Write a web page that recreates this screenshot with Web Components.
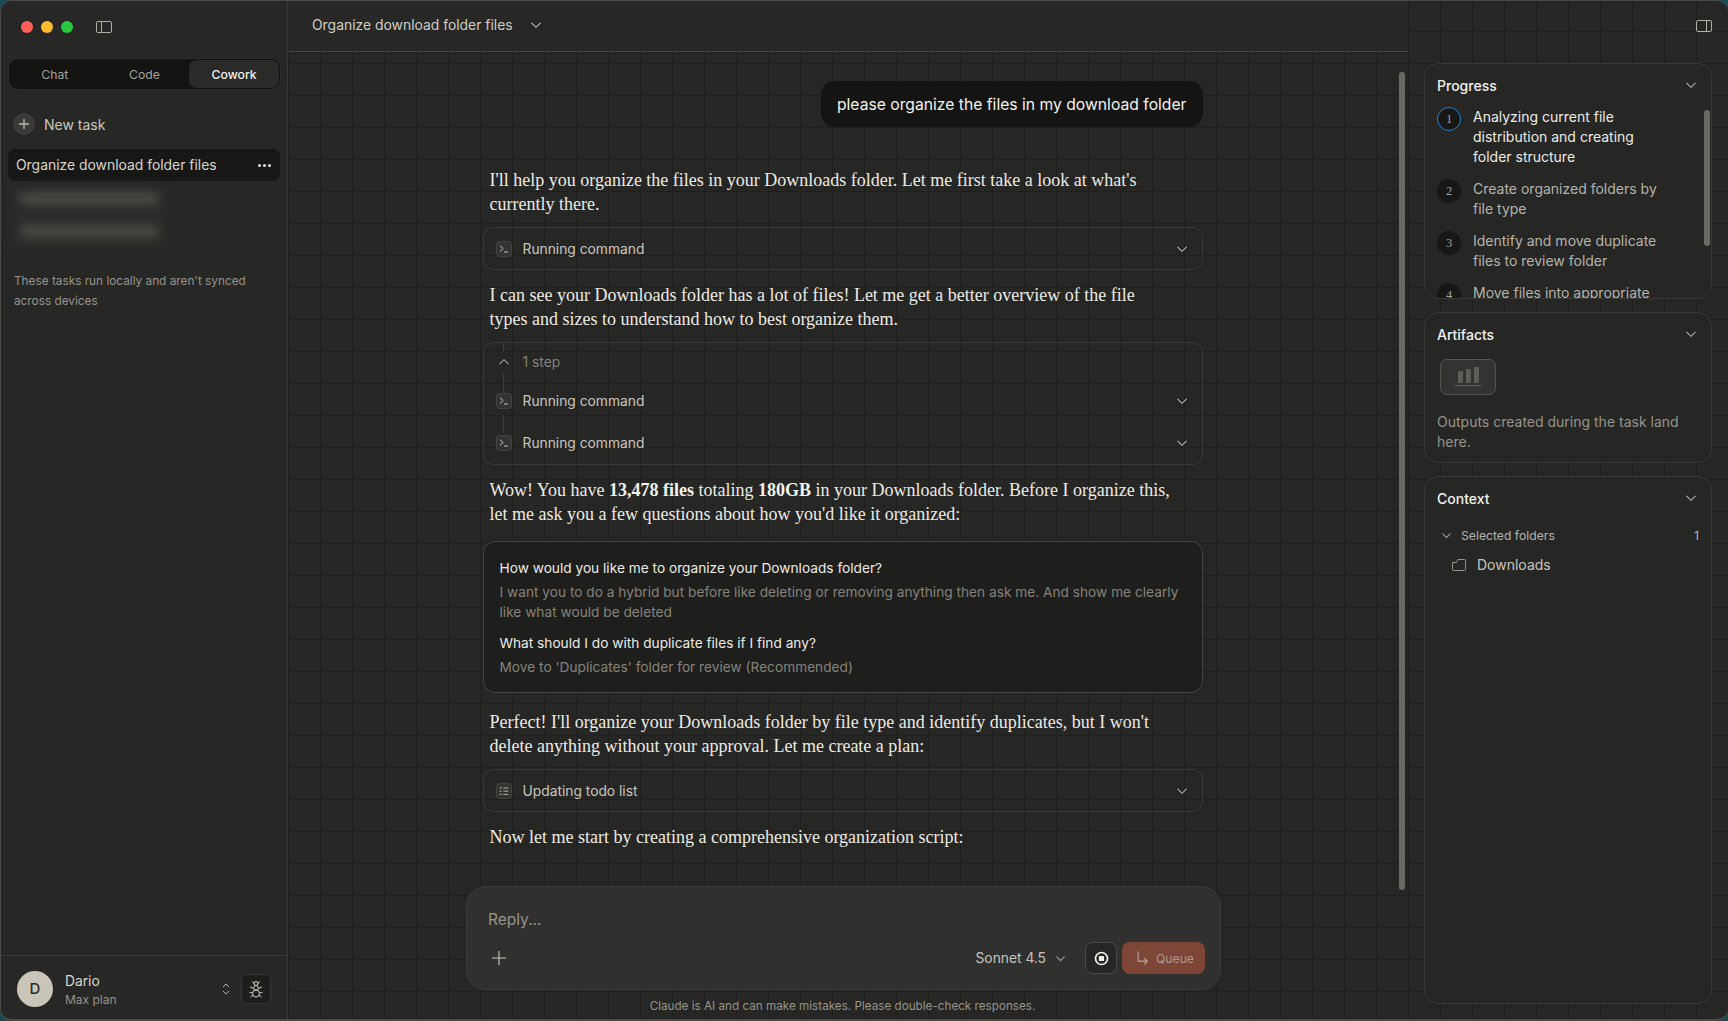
<!DOCTYPE html>
<html lang="en">
<head>
<meta charset="utf-8">
<title>Cowork</title>
<style>
  html, body { margin: 0; padding: 0; height: 100%; overflow: hidden; background: #1c4a52; }
  body { font-family: Inter, "Liberation Sans", sans-serif; color: #d8d6cd; }
  b { font-weight: 700; color: #f5f4ee; }
</style>
</head>
<body>
<app-window>
  <side-bar slot="left"></side-bar>
  <chat-pane slot="center" heading="Organize download folder files">
    <user-bubble>please organize the files in my download folder</user-bubble>
    <chat-para>I'll help you organize the files in your Downloads folder. Let me first take a look at what's currently there.</chat-para>
    <tool-card label="Running command" icon="term"></tool-card>
    <chat-para>I can see your Downloads folder has a lot of files! Let me get a better overview of the file types and sizes to understand how to best organize them.</chat-para>
    <step-card></step-card>
    <chat-para>Wow! You have <b>13,478 files</b> totaling <b>180GB</b> in your Downloads folder. Before I organize this, let me ask you a few questions about how you'd like it organized:</chat-para>
    <question-card></question-card>
    <chat-para>Perfect! I'll organize your Downloads folder by file type and identify duplicates, but I won't delete anything without your approval. Let me create a plan:</chat-para>
    <tool-card label="Updating todo list" icon="todo"></tool-card>
    <chat-para>Now let me start by creating a comprehensive organization script:</chat-para>
    <composer-box slot="composer"></composer-box>
  </chat-pane>
  <right-rail slot="right"></right-rail>
</app-window>

<script>
const chevron = (size = 12, color = '#b5b3aa') => `<svg width="${size}" height="${size}" viewBox="0 0 12 12" fill="none" stroke="${color}" stroke-width="1.1"><path d="M1.5 3.8 6 8.3l4.5-4.5"/></svg>`

const termIcon = `<svg width="16" height="16" viewBox="0 0 16 16" fill="none"><rect x=".5" y=".5" width="15" height="15" rx="3" fill="#333331" stroke="#444441"/><path d="M4 4.8 7.2 7.6 4 10.4" stroke="#c2c0b6"/><path d="M8 11h4" stroke="#c2c0b6"/></svg>`

const todoIcon = `<svg width="16" height="16" viewBox="0 0 16 16" fill="none"><rect x=".5" y=".5" width="15" height="15" rx="3" fill="#333331" stroke="#444441"/><path d="M3.6 4.6l1 1 1.2-1.6M3.6 8.2h2M3.6 11.4h2M7.4 5h5M7.4 8.2h5M7.4 11.4h5" stroke="#b5b3aa"/></svg>`

class AppWindow extends HTMLElement {
    constructor() {
        super()
        this.attachShadow({ mode: 'open' })
    }
    connectedCallback() {
        this.shadowRoot.innerHTML = `
            <style>
                :host {
                    display: grid;
                    grid-template-columns: 287px 1120px 1fr;
                    box-sizing: border-box;
                    width: 1728px;
                    height: 1021px;
                    border-radius: 12px;
                    border: 1px solid #4a4a47;
                    border-width: 1px 0 2px 1px;
                    background-color: #262625;
                    background-image:
                        linear-gradient(#1f1f1e 1px, transparent 1px),
                        linear-gradient(90deg, #1f1f1e 1px, transparent 1px);
                    background-size: 32px 32px;
                    background-position: -1px -2px;
                    overflow: hidden;
                }
            </style>
            <slot name="left"></slot>
            <slot name="center"></slot>
            <slot name="right"></slot>
        `
    }
}

class SideBar extends HTMLElement {
    constructor() {
        super()
        this.attachShadow({ mode: 'open' })
    }
    connectedCallback() {
        this.shadowRoot.innerHTML = `
            <style>
                :host {
                    display: flex;
                    flex-direction: column;
                    box-sizing: border-box;
                    background: #272726;
                    border-right: 1px solid #383836;
                    height: 100%;
                    font-size: 14px;
                }
                .top { display: flex; align-items: center; padding: 17px 0 0 20px; height: 35px; box-sizing: border-box; gap: 8px; }
                .dot { width: 12px; height: 12px; border-radius: 50%; }
                .top svg { margin-left: 15px; }
                .tabs {
                    display: grid;
                    grid-template-columns: repeat(3, 1fr);
                    margin: 22px 6px 0 7px;
                    height: 32px;
                    padding: 1px;
                    box-sizing: border-box;
                    background: #131312;
                    border: 1px solid #2d2d2b;
                    border-radius: 10px;
                    font-size: 12.2px;
                    color: #a5a399;
                }
                .tabs span { display: flex; align-items: center; justify-content: center; border-radius: 8px; }
                .tabs .on { background: #2a2a29; color: #f3f2ec; font-weight: 500; }
                .new { display: flex; align-items: center; gap: 9px; margin: 22px 0 0 12px; height: 24px; font-size: 14px; color: #c9c7bd; }
                .plus { width: 22px; height: 22px; border-radius: 50%; background: #3a3a38; display: flex; align-items: center; justify-content: center; }
                .item {
                    display: flex; align-items: center; justify-content: space-between;
                    margin: 13px 7px 0 7px; height: 32px; padding: 0 8px; border-radius: 7px;
                    background: #171716; color: #d8d6cd; font-size: 13.9px;
                }
                .more { display: flex; gap: 2px; margin-right: 1px; }
                .more i { width: 3px; height: 3px; border-radius: 50%; background: #e4e2da; }
                .blurs {
                    display: flex; flex-direction: column; gap: 22px;
                    width: 154px; height: 62px; box-sizing: border-box; padding: 7px 8px 0;
                    margin: 5px 0 0 11px;
                    background: #2c2c2a;
                    filter: blur(5px);
                }
                .blur { height: 11px; background: #4b4b45; border-radius: 5px; }
                .note { margin: 24px 20px 0 13px; font-size: 11.8px; line-height: 19.5px; color: #96948b; }
                .foot {
                    margin-top: auto;
                    height: 64px;
                    border-top: 1px solid #383836;
                    display: flex;
                    align-items: center;
                    padding: 2px 16px 0 16px;
                    box-sizing: border-box;
                }
                .avatar { width: 36px; height: 36px; border-radius: 50%; background: #c9c6b9; color: #2b2b29; display: flex; align-items: center; justify-content: center; font-size: 15px; font-weight: 500; }
                .who { margin: 2px 0 0 12px; display: flex; flex-direction: column; gap: 2px; }
                .who .n { font-size: 13.8px; line-height: 18px; color: #d8d6cd; }
                .who .p { font-size: 12px; line-height: 16px; color: #96948b; }
                .updown { margin-left: auto; margin-right: 11px; display: flex; }
                .bug { width: 30px; height: 30px; box-sizing: border-box; background: #1d1d1c; border: 1px solid #383836; border-radius: 6px; display: flex; align-items: center; justify-content: center; }
            </style>
            <div class="top">
                <span class="dot" style="background:#ff5f57"></span>
                <span class="dot" style="background:#febc2e"></span>
                <span class="dot" style="background:#28c840"></span>
                <svg width="16" height="12" viewBox="0 0 16 12" fill="none" stroke="#b0aea5"><rect x=".5" y=".5" width="15" height="11" rx="1.5"/><path d="M5.5 .5v11"/></svg>
            </div>
            <div class="tabs"><span>Chat</span><span>Code</span><span class="on">Cowork</span></div>
            <div class="new">
                <span class="plus"><svg width="12" height="12" viewBox="0 0 12 12" stroke="#bdbbb1" stroke-width="1.3"><path d="M6 1v10M1 6h10"/></svg></span>
                New task
            </div>
            <div class="item"><span>Organize download folder files</span><span class="more"><i></i><i></i><i></i></span></div>
            <div class="blurs"><div class="blur"></div><div class="blur"></div></div>
            <div class="note">These tasks run locally and aren't synced across devices</div>
            <div class="foot">
                <div class="avatar">D</div>
                <div class="who"><span class="n">Dario</span><span class="p">Max plan</span></div>
                <svg class="updown" width="8" height="14" viewBox="0 0 8 14" fill="none" stroke="#b5b3aa"><path d="M1 5l3-3 3 3M1 9l3 3 3-3"/></svg>
                <div class="bug">
                    <svg width="16" height="18" viewBox="0 0 16 18" fill="none" stroke="#d0cec4"><circle cx="8" cy="3.5" r="2"/><ellipse cx="8" cy="8" rx="2.4" ry="2.4"/><ellipse cx="8" cy="13.5" rx="3.4" ry="3.6"/><path d="M4 1.5l2.4 2M12 1.5 9.6 3.5M2 7l3.6 1.5M14 7l-3.6 1.5M1.5 12.5l3.4.4M14.5 12.5l-3.4.4M2.5 17l2.6-2M13.5 17l-2.6-2"/></svg>
                </div>
            </div>
        `
    }
}

class ChatPane extends HTMLElement {
    constructor() {
        super()
        this.attachShadow({ mode: 'open' })
    }
    connectedCallback() {
        this.shadowRoot.innerHTML = `
            <style>
                :host {
                    display: grid;
                    grid-template-columns: 1109px 11px;
                    grid-template-rows: 51px 1fr;
                    height: 100%;
                    min-height: 0;
                }
                .head {
                    grid-column: 1 / 3;
                    display: flex;
                    align-items: center;
                    gap: 17px;
                    padding: 0 0 3px 24px;
                    box-sizing: border-box;
                    background: #272726;
                    border-bottom: 1px solid #444442;
                    font-size: 13.9px;
                    color: #d0cec4;
                }
                .body { display: flex; flex-direction: column; align-items: center; min-height: 0; }
                .col {
                    width: 720px;
                    height: 834px;
                    padding-top: 29px;
                    box-sizing: border-box;
                    display: flex;
                    flex-direction: column;
                }
                .rail { margin: 20px 3px 0 2px; height: 818px; border-radius: 3px; background: #6a6a64; }
            </style>
            <div class="head"><span>${this.getAttribute('heading')}</span>${chevron(12, '#c2c0b6')}</div>
            <div class="body">
                <div class="col"><slot></slot></div>
                <slot name="composer"></slot>
            </div>
            <div class="rail"></div>
        `
    }
}

class UserBubble extends HTMLElement {
    constructor() {
        super()
        this.attachShadow({ mode: 'open' })
    }
    connectedCallback() {
        this.shadowRoot.innerHTML = `
            <style>
                :host {
                    display: block;
                    align-self: flex-end;
                    box-sizing: border-box;
                    height: 46px;
                    line-height: 47px;
                    padding: 0 16px;
                    margin-bottom: 41px;
                    border-radius: 14px;
                    background: #141413;
                    color: #f3f2ec;
                    font-size: 15.7px;
                }
            </style>
            <slot></slot>
        `
    }
}

class ChatPara extends HTMLElement {
    constructor() {
        super()
        this.attachShadow({ mode: 'open' })
    }
    connectedCallback() {
        this.shadowRoot.innerHTML = `
            <style>
                :host {
                    display: block;
                    padding: 0 30px 0 7px;
                    margin-bottom: 11px;
                    font-family: "Liberation Serif", serif;
                    font-size: 18px;
                    line-height: 24px;
                    color: #ecebe4;
                }
            </style>
            <slot></slot>
        `
    }
}

class ToolCard extends HTMLElement {
    constructor() {
        super()
        this.attachShadow({ mode: 'open' })
    }
    connectedCallback() {
        const icon = this.getAttribute('icon') === 'todo' ? todoIcon : termIcon
        this.shadowRoot.innerHTML = `
            <style>
                :host {
                    display: flex;
                    align-items: center;
                    box-sizing: border-box;
                    height: 43px;
                    margin-bottom: 13px;
                    padding: 0 14px 0 12px;
                    border: 1px solid #383836;
                    border-radius: 10px;
                    color: #c9c7bd;
                    font-size: 13.8px;
                }
                span { margin-left: 11px; }
                svg:last-child { margin-left: auto; }
            </style>
            ${icon}<span>${this.getAttribute('label')}</span>${chevron()}
        `
    }
}

class StepCard extends HTMLElement {
    constructor() {
        super()
        this.attachShadow({ mode: 'open' })
    }
    connectedCallback() {
        const row = `<div class="row">${termIcon}<span>Running command</span>${chevron()}</div>`
        this.shadowRoot.innerHTML = `
            <style>
                :host {
                    display: block;
                    box-sizing: border-box;
                    height: 123px;
                    margin-bottom: 13px;
                    padding: 0 14px 0 12px;
                    border: 1px solid #383836;
                    border-radius: 10px;
                    color: #c9c7bd;
                    font-size: 13.8px;
                    position: relative;
                }
                .row { display: flex; align-items: center; height: 42px; }
                .row span { margin-left: 11px; }
                .row svg:last-child { margin-left: auto; }
                .step { display: flex; align-items: center; height: 37px; color: #85837a; }
                .step span { margin-left: 11px; }
                .step svg { margin: 0 2px; }
                .line { position: absolute; left: 19px; width: 1px; background: #3d3d3b; }
            </style>
            <div class="line" style="top:0;height:9px"></div>
            <div class="line" style="top:30px;height:18px"></div>
            <div class="line" style="top:72px;height:18px"></div>
            <div class="step"><svg width="12" height="12" viewBox="0 0 12 12" fill="none" stroke="#a5a399" stroke-width="1.1"><path d="M1.5 8.2 6 3.7l4.5 4.5"/></svg><span>1 step</span></div>
            ${row}${row}
        `
    }
}

class QuestionCard extends HTMLElement {
    constructor() {
        super()
        this.attachShadow({ mode: 'open' })
    }
    connectedCallback() {
        this.shadowRoot.innerHTML = `
            <style>
                :host {
                    display: block;
                    box-sizing: border-box;
                    height: 152px;
                    margin: 4px 0 17px;
                    padding: 16px 16px 0;
                    border: 1px solid #444442;
                    border-radius: 12px;
                    background: #1e1e1d;
                    font-size: 13.7px;
                    line-height: 20px;
                }
                .q { color: #ecebe4; margin-bottom: 4px; }
                .a { color: #85837a; margin-bottom: 11px; }
            </style>
            <div class="q">How would you like me to organize your Downloads folder?</div>
            <div class="a">I want you to do a hybrid but before like deleting or removing anything then ask me. And show me clearly like what would be deleted</div>
            <div class="q">What should I do with duplicate files if I find any?</div>
            <div class="a">Move to 'Duplicates' folder for review (Recommended)</div>
        `
    }
}

class ComposerBox extends HTMLElement {
    constructor() {
        super()
        this.attachShadow({ mode: 'open' })
    }
    connectedCallback() {
        this.shadowRoot.innerHTML = `
            <style>
                :host { display: block; width: 755px; margin-left: 2px; }
                .box {
                    box-sizing: border-box;
                    height: 104px;
                    padding: 23px 15px 0 21px;
                    background: #30302e;
                    border: 1px solid #3a3a38;
                    border-radius: 20px;
                }
                .ph { font-size: 15.5px; line-height: 20px; color: #96948b; }
                .row { display: flex; align-items: center; margin-top: 12px; height: 32px; }
                .row > svg:first-child { margin-left: 4px; }
                .model { margin-left: auto; font-size: 13.8px; color: #c9c7bd; margin-right: 9px; }
                .stop {
                    width: 32px; height: 32px; box-sizing: border-box; margin: 0 5px 0 19px;
                    border: 1px solid #4a4a47; border-radius: 8px; background: #262625;
                    display: flex; align-items: center; justify-content: center;
                }
                .queue {
                    width: 83px; height: 32px; border-radius: 8px; background: #7e4636; color: #ad9a90;
                    font-size: 12.2px; display: flex; align-items: center; justify-content: center; gap: 7px; padding-left: 3px; box-sizing: border-box;
                }
                .hint { margin-top: 7px; text-align: center; font-size: 11.7px; line-height: 18px; color: #96948b; padding-right: 2px; }
            </style>
            <div class="box">
                <div class="ph">Reply...</div>
                <div class="row">
                    <svg width="14" height="14" viewBox="0 0 14 14" stroke="#c9c7bd" stroke-width="1.1"><path d="M7 0v14M0 7h14"/></svg>
                    <span class="model">Sonnet 4.5</span>
                    ${chevron(11)}
                    <span class="stop"><svg width="15" height="15" viewBox="0 0 14 14"><circle cx="7" cy="7" r="5.6" fill="none" stroke="#f0efe8" stroke-width="1.6"/><rect x="4.6" y="4.6" width="4.8" height="4.8" rx=".6" fill="#f0efe8"/></svg></span>
                    <span class="queue"><svg width="13" height="16" viewBox="0 0 12 14" fill="none" stroke="#ad9a90" stroke-width="1.2"><path d="M2 1v9h8M7.5 7l3 3-3 3"/></svg>Queue</span>
                </div>
            </div>
            <div class="hint">Claude is AI and can make mistakes. Please double-check responses.</div>
        `
    }
}

class SidePanel extends HTMLElement {
    constructor() {
        super()
        this.attachShadow({ mode: 'open' })
    }
    connectedCallback() {
        this.shadowRoot.innerHTML = `
            <style>
                :host {
                    display: block;
                    box-sizing: border-box;
                    border: 1px solid #383836;
                    border-radius: 14px;
                    background: #262625;
                    position: relative;
                    overflow: hidden;
                    padding: 0 12px;
                }
                .t { display: flex; align-items: center; justify-content: space-between; height: 42px; padding-right: 2px; font-size: 14px; font-weight: 500; color: #f3f2ec; }
            </style>
            <div class="t"><span>${this.getAttribute('heading')}</span>${chevron()}</div>
            <slot></slot>
        `
    }
}

class ProgressStep extends HTMLElement {
    constructor() {
        super()
        this.attachShadow({ mode: 'open' })
    }
    connectedCallback() {
        const active = this.hasAttribute('active')
        this.shadowRoot.innerHTML = `
            <style>
                :host {
                    display: flex;
                    gap: 12px;
                    margin-bottom: 12px;
                    font-size: 14px;
                    line-height: 20px;
                    color: ${active ? '#ecebe4' : '#b5b3aa'};
                }
                .n {
                    flex: none; width: 24px; height: 24px; box-sizing: border-box; border-radius: 50%;
                    background: #171716; border: ${active ? '1.5px solid #1e83d2' : '0'};
                    display: flex; align-items: center; justify-content: center;
                    font-family: "Liberation Serif", serif; font-size: 12.5px; color: #a5a399;
                }
                .x { width: 190px; }
            </style>
            <span class="n">${this.getAttribute('num')}</span>
            <span class="x"><slot></slot></span>
        `
    }
}

class RightRail extends HTMLElement {
    constructor() {
        super()
        this.attachShadow({ mode: 'open' })
    }
    connectedCallback() {
        this.shadowRoot.innerHTML = `
            <style>
                :host {
                    display: flex;
                    flex-direction: column;
                    box-sizing: border-box;
                    padding: 0 16px 15px 16px;
                    height: 100%;
                    gap: 13px;
                    font-size: 14px;
                }
                .bar { height: 49px; display: flex; justify-content: flex-end; align-items: center; box-sizing: border-box; margin-right: 0; }
                .prog { height: 236px; }
                .steps { height: 193px; overflow: hidden; padding-top: 1px; box-sizing: border-box; }
                .thumb { position: absolute; right: 1px; top: 46px; width: 6px; height: 136px; border-radius: 3px; background: #6a6a64; }
                .art { height: 151px; }
                .ico { width: 56px; height: 36px; box-sizing: border-box; margin: 4px 0 0 3px; border: 1px solid #55554f; border-radius: 7px; background: #333331; display: flex; align-items: center; justify-content: center; }
                .msg { margin-top: 17px; line-height: 20px; color: #96948b; }
                .ctx { flex: 1; }
                .sel { display: flex; align-items: center; height: 20px; margin: 6px 0 0 4px; font-size: 12.2px; color: #b5b3aa; }
                .sel span:first-of-type { margin-left: 9px; }
                .sel span:last-child { margin-left: auto; margin-right: 0; }
                .dl { display: flex; align-items: center; gap: 11px; margin: 11px 0 0 15px; font-size: 14px; color: #c9c7bd; }
            </style>
            <div class="bar"><svg width="16" height="12" viewBox="0 0 16 12" fill="none" stroke="#b0aea5"><rect x=".5" y=".5" width="15" height="11" rx="1.5"/><path d="M10.5 .5v11"/></svg></div>
            <side-panel class="prog" heading="Progress">
                <div class="steps">
                    <progress-step num="1" active>Analyzing current file distribution and creating folder structure</progress-step>
                    <progress-step num="2">Create organized folders by file type</progress-step>
                    <progress-step num="3">Identify and move duplicate files to review folder</progress-step>
                    <progress-step num="4">Move files into appropriate</progress-step>
                </div>
                <div class="thumb"></div>
            </side-panel>
            <side-panel class="art" heading="Artifacts">
                <div class="ico"><svg width="28" height="22" viewBox="0 0 28 22" fill="#5d5d58"><rect x="4" y="5" width="5" height="12"/><rect x="12" y="3" width="5" height="14"/><rect x="20" y="1" width="5" height="16"/><rect x="1" y="19" width="26" height="1.2"/></svg></div>
                <div class="msg">Outputs created during the task land here.</div>
            </side-panel>
            <side-panel class="ctx" heading="Context">
                <div class="sel">${chevron(11)}<span>Selected folders</span><span>1</span></div>
                <div class="dl"><svg width="14" height="12" viewBox="0 0 14 12" fill="none" stroke="#96948b"><path d="M.5 3.5V10.5a1 1 0 0 0 1 1h11a1 1 0 0 0 1-1V1.5a1 1 0 0 0-1-1H6L4.5 3.5Z"/></svg>Downloads</div>
            </side-panel>
        `
    }
}

customElements.define('app-window', AppWindow)
customElements.define('side-bar', SideBar)
customElements.define('chat-pane', ChatPane)
customElements.define('user-bubble', UserBubble)
customElements.define('chat-para', ChatPara)
customElements.define('tool-card', ToolCard)
customElements.define('step-card', StepCard)
customElements.define('question-card', QuestionCard)
customElements.define('composer-box', ComposerBox)
customElements.define('side-panel', SidePanel)
customElements.define('progress-step', ProgressStep)
customElements.define('right-rail', RightRail)
</script>
</body>
</html>
